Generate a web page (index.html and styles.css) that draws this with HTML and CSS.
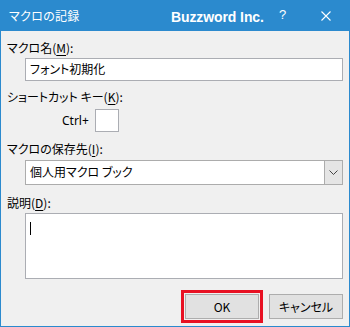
FILE: index.html
```html
<!DOCTYPE html>
<html lang="ja">
<head>
  <meta charset="UTF-8">
  <title>マクロの記録</title>
  <link rel="stylesheet" href="styles.css">
</head>
<body>
  <div class="window">
    <div class="titlebar">
      <span class="title">マクロの記録</span>
      <span class="brand">Buzzword Inc.</span>
      <span class="help">?</span>
      <svg class="close" width="10" height="10" viewBox="0 0 10 10">
        <path d="M0.5 0.5 L9.5 9.5 M9.5 0.5 L0.5 9.5" stroke="#fff" stroke-width="1.1" fill="none"/>
      </svg>
    </div>

    <div class="content">
      <label class="label lbl-name">マクロ名(<u>M</u>):</label>
      <div class="field text-input">フォント初期化</div>

      <label class="label lbl-key">ショートカット キー(<u>K</u>):</label>
      <div class="key-row">
        <span class="ctrl">Ctrl+</span>
        <div class="key-box"></div>
      </div>

      <label class="label lbl-store">マクロの保存先(<u>I</u>):</label>
      <div class="field select">
        <span class="select-text">個人用マクロ ブック</span>
        <div class="select-btn">
          <svg width="9" height="5" viewBox="0 0 9 5">
            <path d="M0.5 0.5 L4.5 4.5 L8.5 0.5" stroke="#444" stroke-width="1" fill="none"/>
          </svg>
        </div>
      </div>

      <label class="label lbl-desc">説明(<u>D</u>):</label>
      <div class="field textarea"><span class="caret"></span></div>

      <div class="buttons">
        <div class="focus-ring">
          <button class="btn">OK</button>
        </div>
        <button class="btn">キャンセル</button>
      </div>
    </div>
  </div>
</body>
</html>
```

FILE: styles.css
```css
* {
  box-sizing: border-box;
}

body {
  margin: 0;
  width: 350px;
  height: 327px;
  font-family: "Noto Sans CJK JP", "Noto Sans", sans-serif;
  font-feature-settings: "palt";
  font-size: 12px;
  color: #000;
  background: #f0f0f0;
}

.window {
  width: 350px;
  height: 327px;
  border: 1px solid #2b8ace;
  border-top: none;
  background: #f0f0f0;
  display: flex;
  flex-direction: column;
}

.titlebar {
  height: 31px;
  margin: 0 -1px;
  background: #2b8ace;
  color: #fff;
  display: flex;
  align-items: center;
  padding-left: 9px;
  white-space: nowrap;
}

.titlebar > * {
  flex-shrink: 0;
}

.title {
  width: 162px;
  font-size: 12px;
  line-height: 16px;
  letter-spacing: 0.3px;
}

.brand {
  width: 108px;
  font-family: "Liberation Sans", Arial, sans-serif;
  font-weight: bold;
  font-size: 14px;
  letter-spacing: -0.1px;
  padding-top: 2px;
}

.help {
  width: 42px;
  font-family: "Liberation Sans", Arial, sans-serif;
  font-size: 13px;
  padding-bottom: 2px;
}

.close {
  margin-top: 1px;
}

.content {
  padding: 0 6px 0 6px;
  display: flex;
  flex-direction: column;
}

.label {
  display: block;
  line-height: 16px;
}

.label u {
  text-decoration-thickness: 1px;
  text-underline-offset: 2px;
}

.lbl-name {
  margin-top: 9px;
}

.lbl-key {
  margin-top: 8px;
}

.lbl-store {
  margin-top: 9px;
}

.lbl-desc {
  margin-top: 10px;
}

.field {
  margin-left: 18px;
  width: 318px;
  background: #fff;
  border: 1px solid #abadb3;
}

.text-input {
  margin-top: 2px;
  height: 23px;
  padding-left: 4px;
  line-height: 20px;
}

.key-row {
  margin-top: 4px;
  display: flex;
  align-items: center;
  padding-left: 55px;
}

.ctrl {
  font-family: "Noto Sans", sans-serif;
  font-size: 12px;
  margin-right: 6px;
}

.key-box {
  width: 24px;
  height: 23px;
  background: #fff;
  border: 1px solid #abadb3;
}

.select {
  margin-top: 3px;
  height: 25px;
  display: flex;
  align-items: stretch;
  border-color: #acacac;
}

.select-text {
  flex: 1;
  padding-left: 4px;
  line-height: 22px;
}

.select-btn {
  width: 18px;
  background: #e5e5e5;
  border-left: 1px solid #acacac;
  display: flex;
  align-items: center;
  justify-content: center;
}

.textarea {
  margin-top: 2px;
  height: 66px;
  padding: 8px 0 0 4px;
}

.caret {
  display: block;
  width: 1px;
  height: 13px;
  background: #000;
}

.buttons {
  margin-top: 11px;
  display: flex;
  justify-content: flex-end;
  align-items: center;
  gap: 6px;
}

.focus-ring {
  border: 3px solid #e81123;
  padding: 1px;
}

.btn {
  width: 74px;
  height: 25px;
  background: #e1e1e1;
  border: 1px solid #adadad;
  font-family: "Noto Sans CJK JP", "Noto Sans", sans-serif;
  font-feature-settings: "palt";
  font-size: 12px;
  color: #000;
  padding: 0;
}
```
